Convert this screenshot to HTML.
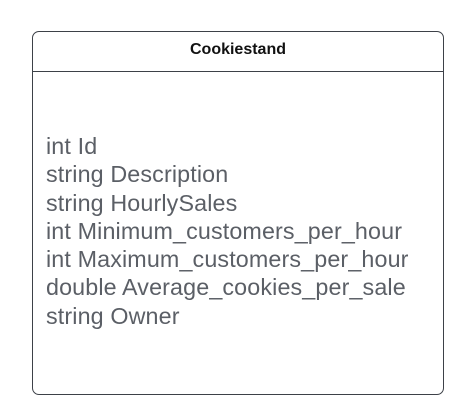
<!DOCTYPE html>
<html><head><style>
html,body{margin:0;padding:0;background:#fff;width:472px;height:413px;overflow:hidden}
.box{position:absolute;left:32px;top:31px;width:410px;height:362px;border:1.3px solid #3d4148;border-radius:7px;}
.hd{position:absolute;left:0;right:0;top:0;height:39px;border-bottom:1.3px solid #3d4148;text-align:center;font:bold 16px/35px "Liberation Sans",sans-serif;color:#111;}
.bd{position:absolute;left:13px;top:100px;font:23.3px/28.3px "Liberation Sans",sans-serif;color:#5b5f66;white-space:nowrap;letter-spacing:0.13px}
</style></head><body>
<div class="box">
<div class="hd">Cookiestand</div>
<div class="bd">int Id<br>string Description<br>string HourlySales<br>int Minimum_customers_per_hour<br>int Maximum_customers_per_hour<br>double Average_cookies_per_sale<br>string Owner</div>
</div>
</body></html>
